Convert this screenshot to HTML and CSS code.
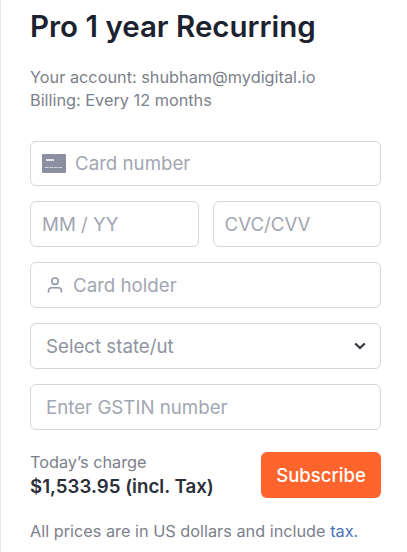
FILE: index.html
```html
<!DOCTYPE html>
<html lang="en">
<head>
    <meta charset="UTF-8">
    <meta name="viewport" content="width=device-width, initial-scale=1.0">
    <title>Checkout</title>
    <link rel="stylesheet" href="styles.css">
</head>
<body>
    <form class="checkout">
        <h1 class="plan-title">Pro 1 year Recurring</h1>
        <p class="account-info">Your account: shubham@mydigital.io<br>Billing: Every 12 months</p>

        <div class="field card-field">
            <svg class="card-icon" width="24" height="19" viewBox="0 0 24 19">
                <rect width="24" height="19" rx="1" fill="#8b8f9f"/>
                <rect x="4" y="5" width="8" height="2" fill="#e4e5ea"/>
                <path d="M3 13.5h18" stroke="#d4d6dd" stroke-width="1.2" stroke-dasharray="3.6 .9"/>
            </svg>
            <span class="placeholder card-text">Card number</span>
        </div>

        <div class="field-row">
            <div class="field"><span class="placeholder">MM / YY</span></div>
            <div class="field"><span class="placeholder">CVC/CVV</span></div>
        </div>

        <div class="field holder-field">
            <svg class="user-icon" width="18" height="18" viewBox="0 0 18 18" fill="none" stroke="#9298a8" stroke-width="1.6">
                <circle cx="9" cy="5.2" r="3.2"/>
                <path d="M2.5 16.5v-1.5c0-2 1.6-3.2 3.5-3.2h6c1.9 0 3.5 1.2 3.5 3.2v1.5"/>
            </svg>
            <span class="placeholder holder-text">Card holder</span>
        </div>

        <div class="field select-field">
            <span class="placeholder select-text">Select state/ut</span>
            <svg class="chevron" width="12" height="8" viewBox="0 0 12 8" fill="none" stroke="#33363f" stroke-width="2.2">
                <path d="M1.2 1.5 6 6l4.8-4.5"/>
            </svg>
        </div>

        <div class="field gstin-field"><span class="placeholder">Enter GSTIN number</span></div>

        <div class="charge-row">
            <div class="charge">
                <div class="charge-label">Today’s charge</div>
                <div class="charge-amount">$1,533.95 (incl. Tax)</div>
            </div>
            <button type="button" class="subscribe-btn">Subscribe</button>
        </div>

        <p class="note">All prices are in US dollars and include <a href="#">tax</a>.</p>
    </form>
</body>
</html>
```

FILE: styles.css
```css
* {
    box-sizing: border-box;
}

body {
    margin: 0;
    background: #fff;
    font-family: Inter, "Liberation Sans", sans-serif;
}

.checkout {
    height: 552px;
    padding: 6px 26px 0 29px;
    border-left: 1px solid #e6e6e8;
    overflow: hidden;
}

.plan-title {
    margin: 0;
    font-size: 29.5px;
    line-height: 40px;
    font-weight: 600;
    white-space: nowrap;
    color: #1c2230;
}

.account-info {
    margin: 20px 0 0;
    font-size: 16.3px;
    line-height: 23px;
    white-space: nowrap;
    color: #7c7f8c;
}

.field {
    display: flex;
    align-items: center;
    height: 46px;
    margin-top: 15px;
    padding: 0 11px;
    border: 1px solid #d5d7df;
    border-radius: 6px;
    background: #fff;
}

.account-info + .field {
    height: 45px;
    margin-top: 29px;
}

.placeholder {
    font-size: 18.7px;
    white-space: nowrap;
    color: #a2a6b2;
}

.card-text {
    margin-left: 9px;
}

.field-row {
    display: flex;
    gap: 14px;
}

.field-row .field {
    flex: 1;
}

.holder-field {
    padding-left: 15px;
}

.holder-text {
    margin-left: 9px;
}

.select-field {
    justify-content: space-between;
    padding: 0 14px 0 15px;
}

.select-text {
    color: #8f93a0;
}

.gstin-field {
    padding-left: 15px;
}

.charge-row {
    display: flex;
    justify-content: space-between;
    align-items: center;
    margin-top: 22px;
}

.charge-label {
    font-size: 16.3px;
    line-height: 20px;
    color: #7c7f8c;
}

.charge-amount {
    margin-top: 4px;
    font-size: 18.7px;
    line-height: 22px;
    font-weight: 600;
    white-space: nowrap;
    color: #2b2f3a;
}

.subscribe-btn {
    width: 120px;
    height: 46px;
    border: none;
    border-radius: 6px;
    background: #ff642d;
    color: #fff;
    font-family: inherit;
    font-size: 18.5px;
    font-weight: 500;
    cursor: pointer;
}

.note {
    margin: 23px 0 0;
    font-size: 16.3px;
    line-height: 20px;
    white-space: nowrap;
    color: #7c7f8c;
}

.note a {
    color: #4a72b8;
    text-decoration: none;
}
```
